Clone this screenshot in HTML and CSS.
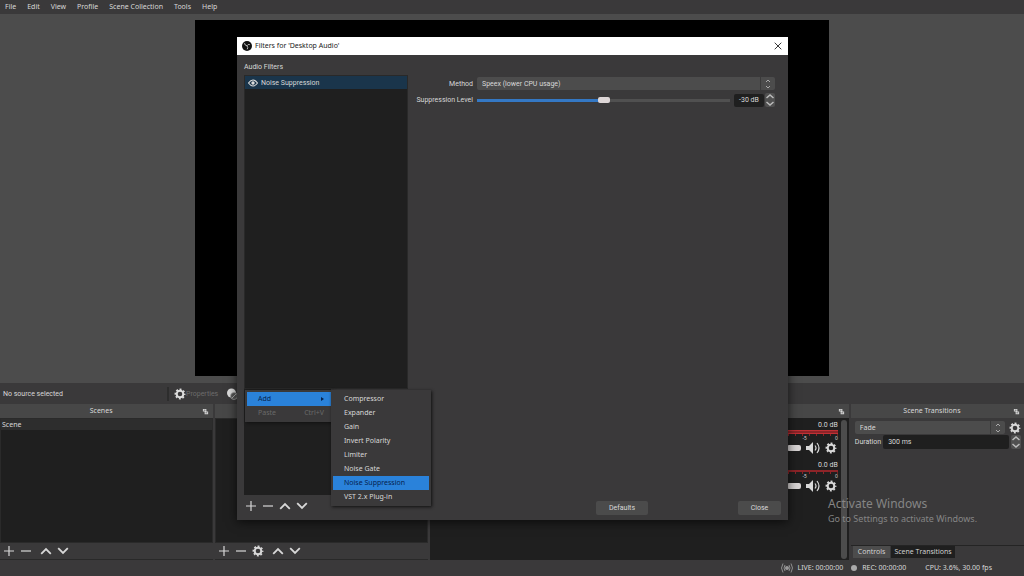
FILE: index.html
```html
<!DOCTYPE html>
<html lang="en">
<head>
<meta charset="utf-8">
<title>OBS Studio</title>
<link rel="stylesheet" href="styles.css">
</head>
<body>
<svg class="defs" aria-hidden="true">
  <symbol id="plus" viewBox="0 0 12 12"><path d="M6 1v10M1 6h10" fill="none" stroke="currentColor" stroke-width="1.2"/></symbol>
  <symbol id="minus" viewBox="0 0 12 12"><path d="M1 6h10" fill="none" stroke="currentColor" stroke-width="1.2"/></symbol>
  <symbol id="up" viewBox="0 0 12 12"><path d="M1.200 8.800L6 4l4.800 4.800" fill="none" stroke="currentColor" stroke-width="1.800"/></symbol>
  <symbol id="down" viewBox="0 0 12 12"><path d="M1.200 3.200L6 8l4.800-4.800" fill="none" stroke="currentColor" stroke-width="1.800"/></symbol>
  <symbol id="gear" viewBox="0 0 12 12"><circle cx="6" cy="6" r="3.300" fill="none" stroke="currentColor" stroke-width="2"/><circle cx="6" cy="6" r="4.600" fill="none" stroke="currentColor" stroke-width="1.700" stroke-dasharray="1.900 1.713" stroke-dashoffset=".95"/></symbol>
  <symbol id="float" viewBox="0 0 8 8"><path d="M1 1h4v3H1zM3 4h4v3H3z" fill="currentColor"/><path d="M2 2.500h2M4 5.500h2" stroke="#444" stroke-width=".8"/></symbol>
  <symbol id="speaker" viewBox="0 0 16 12"><path d="M1 4h3l4-4v12L4 8H1z" fill="currentColor"/><path d="M10 3.500q2 2.500 0 5M12 1q4 5 0 10" fill="none" stroke="currentColor" stroke-width="1.200"/></symbol>
  <symbol id="spin" viewBox="0 0 8 12"><path d="M2 4l2-2 2 2M2 8l2 2 2-2" fill="none" stroke="#aaa" stroke-width="1"/></symbol>
  <symbol id="step" viewBox="0 0 10 14"><path d="M1.500 5L5 2l3.500 3M1.500 9L5 12l3.500-3" fill="none" stroke="#bbb" stroke-width="1.500"/></symbol>
</svg>
<div class="app">
  <nav class="menubar">
    <button>File</button><button>Edit</button><button>View</button><button>Profile</button><button>Scene Collection</button><button>Tools</button><button>Help</button>
  </nav>
  <main class="preview"><div class="canvas"></div></main>
  <div class="sourcebar">
    <span class="source-name">No source selected</span>
    <button class="source-action" disabled><svg class="i12"><use href="#gear"/></svg>Properties</button>
    <button class="source-action" aria-label="Filters"><svg class="i12" viewBox="0 0 12 12"><circle cx="5.500" cy="5" r="4.500" fill="#ddd"/><circle cx="8" cy="8" r="3.500" fill="#555" stroke="#aaa" stroke-width=".7"/><path d="M6 10l4-4" stroke="#aaa"/></svg></button>
  </div>
  <div class="docks">
    <section class="dock scenes">
      <header class="dock-head"><h2>Scenes</h2><svg class="i7"><use href="#float"/></svg></header>
      <ul class="list"><li>Scene</li></ul>
      <div class="tools">
        <button aria-label="Add"><svg class="i12"><use href="#plus"/></svg></button><button aria-label="Remove"><svg class="i12"><use href="#minus"/></svg></button><button class="apart" aria-label="Up"><svg class="i12"><use href="#up"/></svg></button><button aria-label="Down"><svg class="i12"><use href="#down"/></svg></button>
      </div>
    </section>
    <section class="dock sources">
      <header class="dock-head"></header>
      <ul class="list"></ul>
      <div class="tools">
        <button aria-label="Add"><svg class="i12"><use href="#plus"/></svg></button><button aria-label="Remove"><svg class="i12"><use href="#minus"/></svg></button><button aria-label="Settings"><svg class="i12"><use href="#gear"/></svg></button><button class="apart" aria-label="Up"><svg class="i12"><use href="#up"/></svg></button><button aria-label="Down"><svg class="i12"><use href="#down"/></svg></button>
      </div>
    </section>
    <section class="dock mixer">
      <header class="dock-head"><svg class="i7"><use href="#float"/></svg></header>
      <div class="mixer-body">
        <div class="channels">
          <div class="channel">
            <span class="db">0.0 dB</span>
            <div class="meter double"></div>
            <div class="scale"><span>-5</span><span>0</span></div>
            <div class="channel-controls"><i class="knob"></i><button aria-label="Mute"><svg class="i-speaker"><use href="#speaker"/></svg></button><button aria-label="Channel settings"><svg class="i12"><use href="#gear"/></svg></button></div>
          </div>
          <div class="channel">
            <span class="db">0.0 dB</span>
            <div class="meter"></div>
            <div class="scale"><span>-5</span><span>0</span></div>
            <div class="channel-controls"><i class="knob"></i><button aria-label="Mute"><svg class="i-speaker"><use href="#speaker"/></svg></button><button aria-label="Channel settings"><svg class="i12"><use href="#gear"/></svg></button></div>
          </div>
        </div>
        <div class="scrollbar"></div>
      </div>
    </section>
    <section class="dock transitions">
      <header class="dock-head"><h2>Scene Transitions</h2><svg class="i7"><use href="#float"/></svg></header>
      <div class="transition-body">
        <div class="row"><div class="combo"><select aria-label="Transition"><option>Fade</option></select><svg class="i-spin"><use href="#spin"/></svg></div><button aria-label="Transition settings"><svg class="i12"><use href="#gear"/></svg></button></div>
        <div class="row duration"><label for="duration">Duration</label><input id="duration" value="300 ms"><svg class="i-step"><use href="#step"/></svg></div>
      </div>
      <div class="tabs"><button>Controls</button><button class="active">Scene Transitions</button></div>
    </section>
  </div>
  <footer class="status">
    <svg class="i-live" viewBox="0 0 12 10"><circle cx="6" cy="5" r="2" fill="#999"/><path d="M4 2q-2 3 0 6M8 2q2 3 0 6M2 .5q-3 4.500 0 9M10 .5q3 4.500 0 9" fill="none" stroke="#999" stroke-width=".9"/></svg>
    <span class="live">LIVE: 00:00:00</span><i class="dot"></i><span>REC: 00:00:00</span><span class="cpu">CPU: 3.6%, 30.00 fps</span>
  </footer>
</div>
<div class="watermark"><p class="wm-title">Activate Windows</p><p>Go to Settings to activate Windows.</p></div>
<div class="dialog" role="dialog" aria-labelledby="dialog-title">
  <header class="titlebar">
    <svg class="i-logo" viewBox="0 0 10 10"><circle cx="5" cy="5" r="5" fill="#111"/><path d="M2.500 2.200q.2 2.300 2.500 2.600M7.800 3.600q-1.800-.8-2.800 1.200M5.200 8.300q1.200-1.600-.2-3.500" fill="none" stroke="#bbb" stroke-width="1"/></svg>
    <h1 id="dialog-title">Filters for 'Desktop Audio'</h1>
    <button aria-label="Close window"><svg class="i8" viewBox="0 0 8 8"><path d="M.7.7l6.600 6.600M7.300.7L.7 7.300" stroke="#222" stroke-width=".9"/></svg></button>
  </header>
  <div class="dialog-body">
    <div class="filters">
      <h2>Audio Filters</h2>
      <ul class="filter-list wide"><li><svg class="i-eye" viewBox="0 0 10 8"><path d="M.5 4Q5-2 9.500 4 5 10 .5 4z" fill="none" stroke="#ddd" stroke-width="1.100"/><circle cx="5" cy="4" r="1.700" fill="#ddd"/></svg>Noise Suppression</li></ul>
      <div class="filter-list narrow"></div>
      <div class="tools">
        <button aria-label="Add"><svg class="i12"><use href="#plus"/></svg></button><button aria-label="Remove"><svg class="i12"><use href="#minus"/></svg></button><button aria-label="Up"><svg class="i12"><use href="#up"/></svg></button><button aria-label="Down"><svg class="i12"><use href="#down"/></svg></button>
      </div>
    </div>
    <div class="settings">
      <div class="form">
        <label for="method">Method</label>
        <div class="combo"><select id="method"><option>Speex (lower CPU usage)</option></select><svg class="i-spin"><use href="#spin"/></svg></div>
        <label for="level">Suppression Level</label>
        <div class="level"><input id="level" type="range" min="-60" max="0" value="-30"><input class="level-value" aria-label="Level in dB" value="-30 dB"><svg class="i-step"><use href="#step"/></svg></div>
      </div>
      <div class="actions"><button>Defaults</button><button class="close">Close</button></div>
    </div>
  </div>
  <div class="menu context">
    <button class="selected"><span>Add</span><span class="arrow"></span></button>
    <button disabled><span>Paste</span><span>Ctrl+V</span></button>
  </div>
  <div class="menu submenu">
    <button>Compressor</button><button>Expander</button><button>Gain</button><button>Invert Polarity</button><button>Limiter</button><button>Noise Gate</button><button class="selected">Noise Suppression</button><button>VST 2.x Plug-in</button>
  </div>
</div>
</body>
</html>
```
FILE: styles.css
```css
* { box-sizing: border-box; }
body { margin: 0; background: #3a393a; color: #d8d8d8; font: 7px/10px "Noto Sans", "Open Sans", sans-serif; }
h1, h2, p, ul { margin: 0; padding: 0; font: inherit; list-style: none; }
button, input, select { margin: 0; padding: 0; border: 0; background: none; color: inherit; font: inherit; }
button { display: flex; align-items: center; }
svg { display: block; flex: none; }
.defs { position: absolute; width: 0; height: 0; }
.i12 { width: 12px; height: 12px; }
.i8 { width: 8px; height: 8px; }
.i7 { width: 7px; height: 7px; }
.i-speaker { width: 16px; height: 12px; }
.i-spin { width: 8px; height: 12px; }
.i-step { width: 10px; height: 14px; background: #505050; border-radius: 2px; }
.i-live { width: 12px; height: 10px; }
.i-logo { width: 10px; height: 10px; }
.i-eye { width: 10px; height: 8px; }

.app { display: flex; flex-direction: column; height: 100vh; }
.menubar { display: flex; gap: 11px; height: 14px; padding: 0 5px; }
.preview { flex: 1; display: flex; justify-content: center; padding: 6px 195px 7px; background: #4c4c4c; }
.canvas { flex: 1; background: #000; }
.sourcebar { display: flex; align-items: center; height: 21px; padding-left: 3px; font-family: Roboto, sans-serif; }
.source-name { width: 166px; line-height: 14px; border-right: 2px solid #2d2d2d; margin-right: 5px; }
.source-action { margin-right: 8px; color: #ddd; }
.source-action:disabled { color: #6c6c6c; }
.source-action:disabled svg { color: #ddd; }

.docks { display: grid; grid-template-columns: 213fr 213fr 418fr 173fr; gap: 2px; height: 156px; }
.dock { display: flex; flex-direction: column; min-width: 0; }
.dock-head { display: flex; align-items: center; justify-content: flex-end; height: 14px; padding-right: 4px; background: #474747; }
.dock-head h2 { flex: 1; text-align: center; }
.list { flex: 1; background: #1f1f1f; border: 1px solid #2a2a2a; }
.list li { background: #2d2d2d; line-height: 11px; padding-left: 1px; }
.tools { display: flex; align-items: center; gap: 5px; height: 17px; padding-left: 3px; }
.tools .apart { margin-left: 3px; }
.docks .tools { border-bottom: 1px solid #292929; }

.mixer-body { flex: 1; display: flex; background: #1f1f1f; }
.channels { flex: 1; padding-top: 2px; }
.channel { height: 40px; padding-right: 3px; }
.db { display: block; text-align: right; font-family: Roboto, sans-serif; }
.meter { height: 2px; background: #8d2428; }
.meter.double { height: 4px; border-top: 1px solid #c03035; border-bottom: 1px solid #c03035; }
.scale { display: flex; justify-content: flex-end; gap: 28px; line-height: 8px; font-size: 5px; background: repeating-linear-gradient(270deg, #8d2428 0 1px, transparent 1px 7px) top / 100% 2px no-repeat; }
.channel-controls { display: flex; justify-content: flex-end; align-items: center; gap: 4px; padding-right: 1px; }
.knob { width: 14px; height: 6px; background: #d8d4d4; border-radius: 2px; }
.scrollbar { width: 6px; margin: 2px 2px 1px 0; background: #4c4c4c; border-radius: 3px; }

.transition-body { flex: 1; padding: 3px 3px 3px 4px; border-bottom: 1px solid #242424; }
.row { display: flex; align-items: center; gap: 4px; margin-bottom: 1px; }
.row .combo { flex: 1; }
.combo { display: flex; align-items: center; height: 13px; padding-right: 3px; background: #4c4c4c; border-radius: 2px; }
.combo select { flex: 1; height: 13px; padding-left: 5px; appearance: none; border-right: 1px solid #3a3a3a; }
.combo svg { margin-left: 3px; }
.duration { gap: 2px; font-family: Roboto, sans-serif; }
.duration input { flex: 1; min-width: 0; height: 14px; padding-left: 5px; background: #1f1f1f; border-radius: 2px; }
.tabs { display: flex; gap: 1px; height: 14px; padding-left: 2px; font-family: "Open Sans", sans-serif; }
.tabs button { height: 12px; padding: 0 5px; background: #4c4c4c; }
.tabs .active { padding: 0 3px; background: #1f1f1f; }

.status { display: flex; align-items: center; justify-content: flex-end; gap: 5px; height: 16px; padding-right: 32px; }
.live { margin-right: 3px; }
.dot { width: 6px; height: 6px; border-radius: 3px; background: #aaa; }
.cpu { margin-left: 14px; }
.watermark { position: absolute; right: 44px; bottom: 51px; width: 152px; color: #858585; font-size: 9px; line-height: 13px; white-space: nowrap; }
.wm-title { font-size: 12px; line-height: 16px; }

.dialog { position: absolute; inset: 37px 236px 56px 237px; display: flex; flex-direction: column; background: #3a393a; box-shadow: 0 2px 10px #000a; }
.titlebar { display: flex; align-items: center; gap: 3px; height: 18px; padding: 0 6px 0 5px; background: #fff; color: #222; }
.titlebar h1 { flex: 1; }
.dialog-body { flex: 1; display: flex; padding: 7px 0 3px 7px; font-family: Roboto, sans-serif; }
.filters { display: flex; flex-direction: column; width: 164px; }
.filter-list { background: #1f1f1f; }
.wide { flex: 1; margin-top: 3px; border: 1px solid #292929; }
.wide li { display: flex; align-items: center; gap: 3px; height: 13px; padding-left: 3px; background: #1a354b; }
.narrow { width: 87px; height: 106px; }
.filters .tools { height: 22px; padding-left: 1px; }
.settings { flex: 1; display: flex; flex-direction: column; justify-content: space-between; padding: 15px 13px 2px 8px; }
.form { display: grid; grid-template-columns: 57px 1fr; gap: 3px 4px; align-items: center; }
.form label { text-align: right; white-space: nowrap; }
.level { display: flex; align-items: center; gap: 1px; height: 14px; }
.level input[type="range"] { flex: 1; min-width: 0; height: 8px; margin-right: 3px; appearance: none; background: linear-gradient(90deg, #3478c4 50%, #505050 50%) center / 100% 3px no-repeat; }
.level input::-webkit-slider-thumb { appearance: none; width: 12px; height: 6px; border-radius: 2px; background: #ddd6d6; }
.level-value { width: 30px; height: 13px; text-align: center; background: #1f1f1f; border-radius: 2px; }
.actions { display: flex; justify-content: flex-end; gap: 90px; }
.actions button { justify-content: center; width: 52px; height: 14px; background: #4b4b4b; border-radius: 2px; }
.actions .close { width: 43px; margin-right: -6px; }
.menu { position: absolute; background: #3a393a; box-shadow: 1px 1px 3px #111; }
.menu button { width: 100%; height: 14px; padding: 0 7px 0 11px; justify-content: space-between; }
.menu .selected { background: #2a82da; color: #06234f; }
.menu button:disabled { color: #696969; }
.context { left: 8px; bottom: 98px; width: 88px; padding: 2px; }
.arrow { border: 2px solid transparent; border-left: 3px solid #06234f; border-right: 0; }
.submenu { left: 94px; bottom: 14px; width: 100px; padding: 2px; }
```
